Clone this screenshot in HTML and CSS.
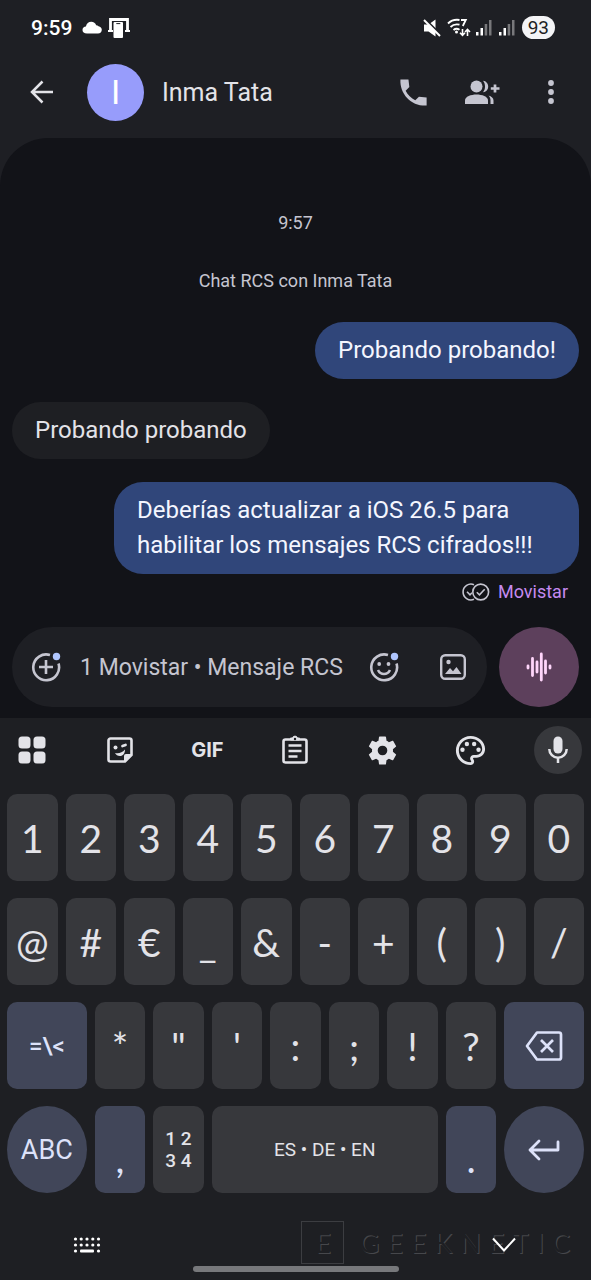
FILE: index.html
```html
<!DOCTYPE html>
<html lang="es">
<head>
<meta charset="utf-8">
<meta name="viewport" content="width=device-width, initial-scale=1">
<title>Inma Tata</title>
<link rel="stylesheet" href="styles.css">
</head>
<body>
<div class="phone">
  <div class="status-bar">
    <span class="clock">9:59</span>
    <svg class="cloud-icon" width="20" height="13" viewBox="0 0 20 13" fill="currentColor"><path d="M5 12.500C2 12.500 0.500 11 0.500 8.900 0.500 7 2 5.600 3.900 5.500 4.500 2.500 6.500 0.700 9.300 0.700c2.300 0 4.200 1.300 4.900 3.600 1 0 1.700.3 2.300 1 2 .2 3.300 1.700 3.300 3.500 0 2.100-1.500 3.700-3.800 3.700z"/></svg>
    <svg class="link-icon" width="22" height="22" viewBox="0 0 22 22"><path d="M2.500 13V2.500h17V13" fill="none" stroke="currentColor" stroke-width="2.800"/><path d="M0 14h5M17 14h5" stroke="currentColor" stroke-width="2"/><rect x="5.500" y="5" width="9.500" height="16" rx="1" fill="currentColor"/><path d="M8.300 6.600h4" stroke="#1e1f24" stroke-width="1"/></svg>
    <svg class="push" width="18" height="18" viewBox="0 0 18 18"><path d="M1 5.500h4.500l7-5v17l-7-5H1z" fill="currentColor"/><path d="M3 1l15 15" stroke="#1e1f24" stroke-width="2"/><path d="M1 1l16 16" stroke="currentColor" stroke-width="2"/></svg>
    <svg class="wifi-icon" width="24" height="20" viewBox="0 0 24 20" fill="none" stroke="currentColor" stroke-width="1.900"><path d="M1 5.500C4 2.500 8 1.300 12.500 2M3.500 9c2.500-2.400 5.500-3.200 9-2.300M6.500 12c1.800-1.500 4-1.600 6-.2"/><circle cx="9.500" cy="14" r="1.500" fill="currentColor" stroke="none"/><path d="M14 2h4.800L15.800 8" stroke-width="1.800"/><path d="M15.500 11v6M13 14.800l2.500 2.500 2.500-2.500M20.500 18v-6.500M18 14l2.500-2.500L23 14" stroke-width="1.600"/></svg>
    <svg width="16" height="17" viewBox="0 0 16 17" fill="currentColor"><path d="M0 13h2.500v3.500H0zM4.500 9H7v7.500H4.500z"/><path opacity=".4" d="M8.700 5h2.500v11.500H8.700zM13 1h2.500v15.500H13z"/></svg>
    <svg class="sim-two" width="16" height="17" viewBox="0 0 16 17" fill="currentColor"><path d="M0 13h2.500v3.500H0zM4.500 9H7v7.500H4.500z"/><path opacity=".4" d="M8.700 5h2.500v11.500H8.700zM13 1h2.500v15.500H13z"/></svg>
    <span class="battery">93</span>
  </div>

  <header class="app-bar">
    <button class="icon-button" aria-label="Atrás"><svg width="24" height="24" viewBox="0 0 24 24" fill="none" stroke="currentColor" stroke-width="2.500"><path d="M23 12H2M12.500 1.500L2 12l10.500 10.500"/></svg></button>
    <span class="avatar">I</span>
    <h1 class="contact">Inma Tata</h1>
    <div class="actions">
      <button class="icon-button" aria-label="Llamar"><svg width="35" height="35" viewBox="0 0 24 24" fill="currentColor"><path d="M21 15.460l-5.270-.61-2.520 2.520c-2.830-1.440-5.150-3.750-6.590-6.590l2.530-2.530L8.540 3H3.030C2.450 13.180 10.820 21.550 21 20.970v-5.510z"/></svg></button>
      <button class="icon-button" aria-label="Añadir personas"><svg width="36" height="26" viewBox="0 0 36 26" fill="currentColor"><circle cx="12.500" cy="7.500" r="6"/><path d="M1 25v-3.500C1 17.500 7 15.500 12.500 15.500S24 17.500 24 21.500V25z"/><path d="M19 1.700c3.200.3 5.200 2.800 5.200 5.800s-2 5.500-5.200 5.800c1.300-1.500 2-3.500 2-5.800s-.7-4.300-2-5.800zM24.500 16.500c3 .9 5 2.600 5 5V25h-3v-3.500c0-2-.7-3.700-2-5z"/><path d="M31 5.500v8M26.800 9.500H35.500" stroke="currentColor" stroke-width="2.700"/></svg></button>
      <button class="icon-button" aria-label="Más opciones"><svg width="6" height="24" viewBox="0 0 6 24" fill="currentColor"><circle cx="3" cy="3" r="2.900"/><circle cx="3" cy="12" r="2.900"/><circle cx="3" cy="21" r="2.900"/></svg></button>
    </div>
  </header>

  <main class="conversation">
    <time class="note">9:57</time>
    <p class="note note-rcs">Chat RCS con Inma Tata</p>
    <p class="bubble sent">Probando probando!</p>
    <p class="bubble received">Probando probando</p>
    <p class="bubble sent last">Deberías actualizar a iOS 26.5 para<br>habilitar los mensajes RCS cifrados!!!</p>
    <div class="delivery">
      <svg width="28" height="18" viewBox="0 0 28 18" fill="none" stroke="currentColor" stroke-width="1.600"><circle cx="18.700" cy="9" r="7.900"/><path d="M12 1.700A7.900 7.900 0 1 0 12 16.300M5 8.800l3 3 2-2M14.800 9.200l2.700 2.700 5.200-5.600"/></svg>
      <span class="carrier">Movistar</span>
    </div>
    <form class="composer">
      <div class="field">
        <button type="button" class="icon-button" aria-label="Adjuntar"><svg width="30" height="30" viewBox="0 0 30 30" fill="none" stroke="currentColor" stroke-width="2.600"><path d="M19 3A12.900 12.900 0 1 0 27.500 11.500M15 8v14M8 15h14"/><circle cx="25.500" cy="4.500" r="3.700" fill="#b0c6ff" stroke="none"/></svg></button>
        <input class="message-input" type="text" aria-label="Mensaje" placeholder="1 Movistar • Mensaje RCS">
        <button type="button" class="icon-button emoji" aria-label="Emojis"><svg width="30" height="30" viewBox="0 0 30 30" fill="none" stroke="currentColor" stroke-width="2.600"><path d="M19 3A12.900 12.900 0 1 0 27.500 11.500M9 18c2.500 5.300 9.500 5.300 12 0"/><circle cx="10.200" cy="12" r="1.900" fill="currentColor" stroke="none"/><circle cx="19.500" cy="12" r="1.900" fill="currentColor" stroke="none"/><circle cx="25.500" cy="4.500" r="3.700" fill="#b0c6ff" stroke="none"/></svg></button>
        <button type="button" class="icon-button" aria-label="Galería"><svg width="26" height="26" viewBox="0 0 26 26"><rect x="1.200" y="1.200" width="23.600" height="23.600" rx="4" fill="none" stroke="currentColor" stroke-width="2.400"/><circle cx="8.500" cy="8" r="2.200" fill="currentColor"/><path d="M5 20l5-6 3 3.300 3.500-4.300 5 7z" fill="currentColor"/></svg></button>
      </div>
      <button type="button" class="voice" aria-label="Nota de voz"><svg width="26" height="30" viewBox="0 0 26 30" stroke="currentColor" stroke-width="2.800" stroke-linecap="round"><path d="M2 14v2M6.500 6.500v17M11 10v10M15.300 2v26M19.500 9v12M24 14v2"/></svg></button>
    </form>
  </main>

  <section class="keyboard" aria-label="Teclado">
    <div class="tools">
      <button class="tool" aria-label="Funciones"><svg width="28" height="28" viewBox="0 0 28 28" fill="currentColor"><rect x=".5" y=".5" width="12" height="12" rx="3.500"/><rect x="15.500" y=".5" width="12" height="12" rx="3.500"/><rect x=".5" y="15.500" width="12" height="12" rx="3.500"/><rect x="15.500" y="15.500" width="12" height="12" rx="3.500"/></svg></button>
      <button class="tool" aria-label="Pegatinas"><svg width="28" height="28" viewBox="0 0 28 28"><path d="M19 25.500H4.500a2 2 0 0 1-2-2v-19a2 2 0 0 1 2-2h19a2 2 0 0 1 2 2V19z" fill="none" stroke="currentColor" stroke-width="2.600"/><path d="M18 26v-6a2 2 0 0 1 2-2h6z" fill="currentColor"/><circle cx="9.500" cy="11.500" r="2" fill="currentColor"/><path d="M16.500 10l3-1" stroke="currentColor" stroke-width="2.800" stroke-linecap="round"/><path d="M9 17c4 .8 7-.2 10-3.500 0 4-2 6.500-5 6.500-2.300 0-4-1-5-3z" fill="currentColor"/></svg></button>
      <button class="tool gif">GIF</button>
      <button class="tool" aria-label="Portapapeles"><svg width="28" height="30" viewBox="0 0 28 30" fill="none" stroke="currentColor" stroke-width="2.600"><rect x="2.500" y="4.500" width="23" height="23" rx="2"/><path d="M7.500 10.500h13M7.500 16h13M7.500 21.500h9"/><path d="M9.500 5V3h2a2.600 2.600 0 0 1 5 0h2v2z" fill="currentColor" stroke-width="1"/><circle cx="14" cy="4" r="1.200" fill="#1e1f23" stroke="none"/></svg></button>
      <button class="tool" aria-label="Ajustes"><svg width="35" height="35" viewBox="0 0 24 24" fill="currentColor"><path d="M19.140 12.940c.04-.3.06-.61.06-.94 0-.32-.02-.64-.07-.94l2.030-1.580c.18-.14.23-.41.12-.61l-1.920-3.320c-.12-.22-.37-.29-.59-.22l-2.390.96c-.5-.38-1.030-.7-1.620-.94l-.36-2.540c-.04-.24-.24-.41-.48-.41h-3.840c-.24 0-.43.17-.47.41l-.36 2.540c-.59.24-1.130.57-1.620.94l-2.390-.96c-.22-.08-.47 0-.59.22L2.740 8.870c-.12.21-.08.47.12.61l2.030 1.580c-.05.3-.09.63-.09.94s.02.64.07.94l-2.030 1.580c-.18.14-.23.41-.12.61l1.920 3.320c.12.22.37.29.59.22l2.390-.96c.5.38 1.030.7 1.620.94l.36 2.540c.05.24.24.41.48.41h3.840c.24 0 .44-.17.47-.41l.36-2.540c.59-.24 1.130-.56 1.620-.94l2.390.96c.22.08.47 0 .59-.22l1.920-3.320c.12-.22.07-.47-.12-.61l-2.010-1.580zM12 15.300a3.300 3.300 0 1 1 0-6.600 3.300 3.300 0 0 1 0 6.600z"/></svg></button>
      <button class="tool" aria-label="Temas"><svg width="35" height="35" viewBox="0 0 24 24" fill="currentColor"><path d="M12 22C6.490 22 2 17.510 2 12S6.490 2 12 2s10 4.040 10 9c0 3.310-2.690 6-6 6h-1.770c-.28 0-.5.22-.5.5 0 .12.05.23.13.33.41.47.64 1.060.64 1.670 0 1.380-1.120 2.500-2.500 2.500zm0-18c-4.410 0-8 3.590-8 8s3.590 8 8 8c.28 0 .5-.22.5-.5 0-.16-.08-.28-.14-.35-.41-.46-.63-1.050-.63-1.650 0-1.380 1.120-2.500 2.500-2.500H16c2.210 0 4-1.790 4-4 0-3.860-3.590-7-8-7z"/><circle cx="6.500" cy="11.500" r="1.500"/><circle cx="9.500" cy="7.500" r="1.500"/><circle cx="14.500" cy="7.500" r="1.500"/><circle cx="17.500" cy="11.500" r="1.500"/></svg></button>
      <button class="tool dictate" aria-label="Dictado"><svg width="20" height="28" viewBox="0 0 20 28"><rect x="5.500" y=".5" width="9" height="17" rx="4.500" fill="currentColor"/><path d="M1.300 13a8.700 8.700 0 0 0 17.400 0M10 21.500V27" fill="none" stroke="currentColor" stroke-width="2.500"/></svg></button>
    </div>

    <div class="keys">
      <button class="key">1</button><button class="key">2</button><button class="key">3</button><button class="key">4</button><button class="key">5</button><button class="key">6</button><button class="key">7</button><button class="key">8</button><button class="key">9</button><button class="key">0</button>

      <button class="key">@</button><button class="key">#</button><button class="key">€</button><button class="key">_</button><button class="key">&amp;</button><button class="key">-</button><button class="key">+</button><button class="key">(</button><button class="key">)</button><button class="key">/</button>

      <button class="key wide accent more">=\&lt;</button><button class="key">*</button><button class="key">"</button><button class="key">'</button><button class="key">:</button><button class="key">;</button><button class="key">!</button><button class="key">?</button>
      <button class="key wide accent" aria-label="Borrar"><svg width="38" height="30" viewBox="0 0 38 30" fill="none" stroke="currentColor" stroke-width="2.700" stroke-linejoin="round"><path d="M12 1.500h22a2 2 0 0 1 2 2v23a2 2 0 0 1-2 2H12L2 15z"/><path d="M16 9l12 12M28 9L16 21"/></svg></button>

      <button class="key wide accent round letters">ABC</button><button class="key accent low">,</button><button class="key numpad"><span>1 2</span><span>3 4</span></button><button class="key space">ES • DE • EN</button><button class="key accent low">.</button>
      <button class="key wide accent round" aria-label="Intro"><svg width="32" height="22" viewBox="0 0 32 22" fill="none" stroke="currentColor" stroke-width="2.800" stroke-linecap="round" stroke-linejoin="round"><path d="M30 3v8H2M11 2l-9 9 9 9"/></svg></button>
    </div>

    <nav class="nav-bar">
      <button class="nav-button" aria-label="Cambiar teclado"><svg width="28" height="16" viewBox="0 0 28 16" fill="currentColor"><circle cx="2.500" cy="2" r="1.600"/><circle cx="8.200" cy="2" r="1.600"/><circle cx="14" cy="2" r="1.600"/><circle cx="19.800" cy="2" r="1.600"/><circle cx="25.500" cy="2" r="1.600"/><circle cx="2.500" cy="8" r="1.600"/><circle cx="8.200" cy="8" r="1.600"/><circle cx="14" cy="8" r="1.600"/><circle cx="19.800" cy="8" r="1.600"/><circle cx="25.500" cy="8" r="1.600"/><circle cx="2.500" cy="14" r="1.600"/><circle cx="25.500" cy="14" r="1.600"/><rect x="7" y="12.500" width="14" height="3" rx="1"/></svg></button>
      <button class="nav-button" aria-label="Ocultar teclado"><svg width="24" height="16" viewBox="0 0 24 16" fill="none" stroke="currentColor" stroke-width="2"><path d="M1 1.500l11 12 11-12"/></svg></button>
      <div class="watermark"><span class="mark">E</span><span class="brand">GEEKNETIC</span></div>
      <span class="home-handle"></span>
    </nav>
  </section>
</div>
</body>
</html>
```
FILE: styles.css
```css
* { box-sizing: border-box; }

body {
  margin: 0;
  background: #1e1f24;
  color: #e3e3e8;
  font-family: Roboto, "Noto Sans", sans-serif;
}

button {
  padding: 0;
  border: 0;
  background: none;
  color: inherit;
  font: inherit;
}

svg { display: block; flex: none; }

h1, p { margin: 0; font-weight: 400; }

.phone {
  display: flex;
  flex-direction: column;
  min-height: 100vh;
}

/* System status bar */
.status-bar {
  display: flex;
  align-items: center;
  height: 55px;
  padding: 0 36px 0 31px;
  color: #fff;
}
.clock { font-size: 21px; font-weight: 500; }
.cloud-icon { margin-left: 10px; }
.link-icon { margin-left: 6px; }
.push { margin-left: auto; }
.wifi-icon { margin: 0 5px 0 6px; }
.sim-two { margin: 0 7px; }
.battery {
  padding: 0 6px;
  border-radius: 12px;
  background: #f4f4f6;
  color: #1e1f24;
  font-size: 19px;
  line-height: 23px;
}

/* Conversation header */
.app-bar {
  display: flex;
  align-items: center;
  height: 74px;
  padding: 0 22px 0 24px;
}
.icon-button {
  display: flex;
  flex: none;
  align-items: center;
  justify-content: center;
  width: 36px;
  height: 48px;
  color: #c5c5d0;
}
.app-bar > .icon-button { color: #e3e3e8; }
.avatar {
  width: 57px;
  height: 57px;
  margin: 0 18px 0 27px;
  border-radius: 50%;
  background: #979cfb;
  color: #fff;
  font-size: 34px;
  line-height: 57px;
  text-align: center;
}
.contact { font-size: 25px; }
.actions {
  display: flex;
  gap: 33px;
  margin-left: auto;
}

/* Messages */
.conversation {
  display: flex;
  flex: 1;
  flex-direction: column;
  margin-top: 9px;
  padding: 74px 12px 11px;
  border-radius: 48px 48px 0 0;
  background: #121318;
}
.note {
  color: #c5c5d0;
  font-size: 18px;
  line-height: 22px;
  text-align: center;
}
.note-rcs { margin: 36px 0 30px; }
.bubble {
  margin-bottom: 23px;
  padding: 11px 23px;
  border-radius: 29px;
  font-size: 24px;
  line-height: 35px;
}
.sent {
  align-self: flex-end;
  background: #30467a;
  color: #f4f6ff;
}
.received {
  align-self: flex-start;
  background: #1e1f23;
}
.last {
  width: 82%;
  margin-bottom: 8px;
}
.delivery {
  display: flex;
  align-items: center;
  align-self: flex-end;
  gap: 8px;
  margin-right: 11px;
  color: #c5c5d0;
  font-size: 18px;
  line-height: 20px;
}
.carrier { color: #c58af0; }

.composer {
  display: flex;
  gap: 12px;
  margin-top: auto;
}
.field {
  display: flex;
  flex: 1;
  align-items: center;
  min-width: 0;
  height: 80px;
  padding: 0 16px;
  border-radius: 40px;
  background: #1e1f24;
}
.message-input {
  flex: 1;
  min-width: 0;
  margin-left: 16px;
  padding: 0;
  border: 0;
  outline: 0;
  background: none;
  color: #e3e3e8;
  font: 400 23px Roboto, "Noto Sans", sans-serif;
}
.message-input::placeholder { color: #c5c5d0; opacity: 1; }
.emoji { margin-right: 33px; }
.voice {
  display: flex;
  flex: none;
  align-items: center;
  justify-content: center;
  width: 80px;
  height: 80px;
  border-radius: 50%;
  background: #5d405c;
  color: #ffd6fb;
}

/* Keyboard */
.keyboard { background: #1e1f23; }
.tools {
  display: flex;
  justify-content: space-between;
  padding: 8px 9px 20px 8px;
}
.tool {
  display: flex;
  align-items: center;
  justify-content: center;
  width: 48px;
  height: 48px;
  border-radius: 50%;
}
.gif { font: 700 20px Inter, sans-serif; }
.dictate { background: #37383c; }

.keys {
  display: grid;
  grid-template-columns: repeat(20, 1fr);
  row-gap: 17px;
  padding: 0 3px;
}
.key {
  display: flex;
  grid-column: span 2;
  align-items: center;
  justify-content: center;
  height: 87px;
  margin: 0 4px;
  border-radius: 10px;
  background: #37383c;
  font: 400 39px Lato, sans-serif;
}
.wide { grid-column: span 3; }
.accent { background: #414659; color: #dde2f9; }
.round { border-radius: 50%; }
.more { font: 500 24px Roboto, sans-serif; }
.letters { font: 400 27px Roboto, sans-serif; }
.low {
  align-items: flex-end;
  padding-bottom: 12px;
}
.numpad {
  flex-direction: column;
  font: 500 19px/22px Roboto, sans-serif;
}
.space {
  grid-column: span 8;
  font: 400 19px Roboto, sans-serif;
}

/* Navigation area */
.nav-bar {
  position: relative;
  display: flex;
  justify-content: space-between;
  height: 87px;
  padding: 28px 63px 0;
  color: #fff;
}
.nav-button {
  position: relative;
  z-index: 1;
  display: flex;
  align-items: center;
  justify-content: center;
  width: 48px;
  height: 48px;
}
.home-handle {
  position: absolute;
  bottom: 8px;
  left: 50%;
  width: 206px;
  height: 6px;
  margin-left: -103px;
  border-radius: 3px;
  background: #77787b;
}
.watermark {
  position: absolute;
  right: 21px;
  bottom: 16px;
  display: flex;
  align-items: center;
  gap: 15px;
  color: #1e1f23;
  font: 400 27px Lato, sans-serif;
  text-shadow: 1px 1px 0 #46474b;
  pointer-events: none;
}
.mark {
  width: 43px;
  height: 43px;
  border: 1px solid #3c3d41;
  line-height: 41px;
  text-align: center;
}
.brand { letter-spacing: 8px; margin-right: -8px; }
```
